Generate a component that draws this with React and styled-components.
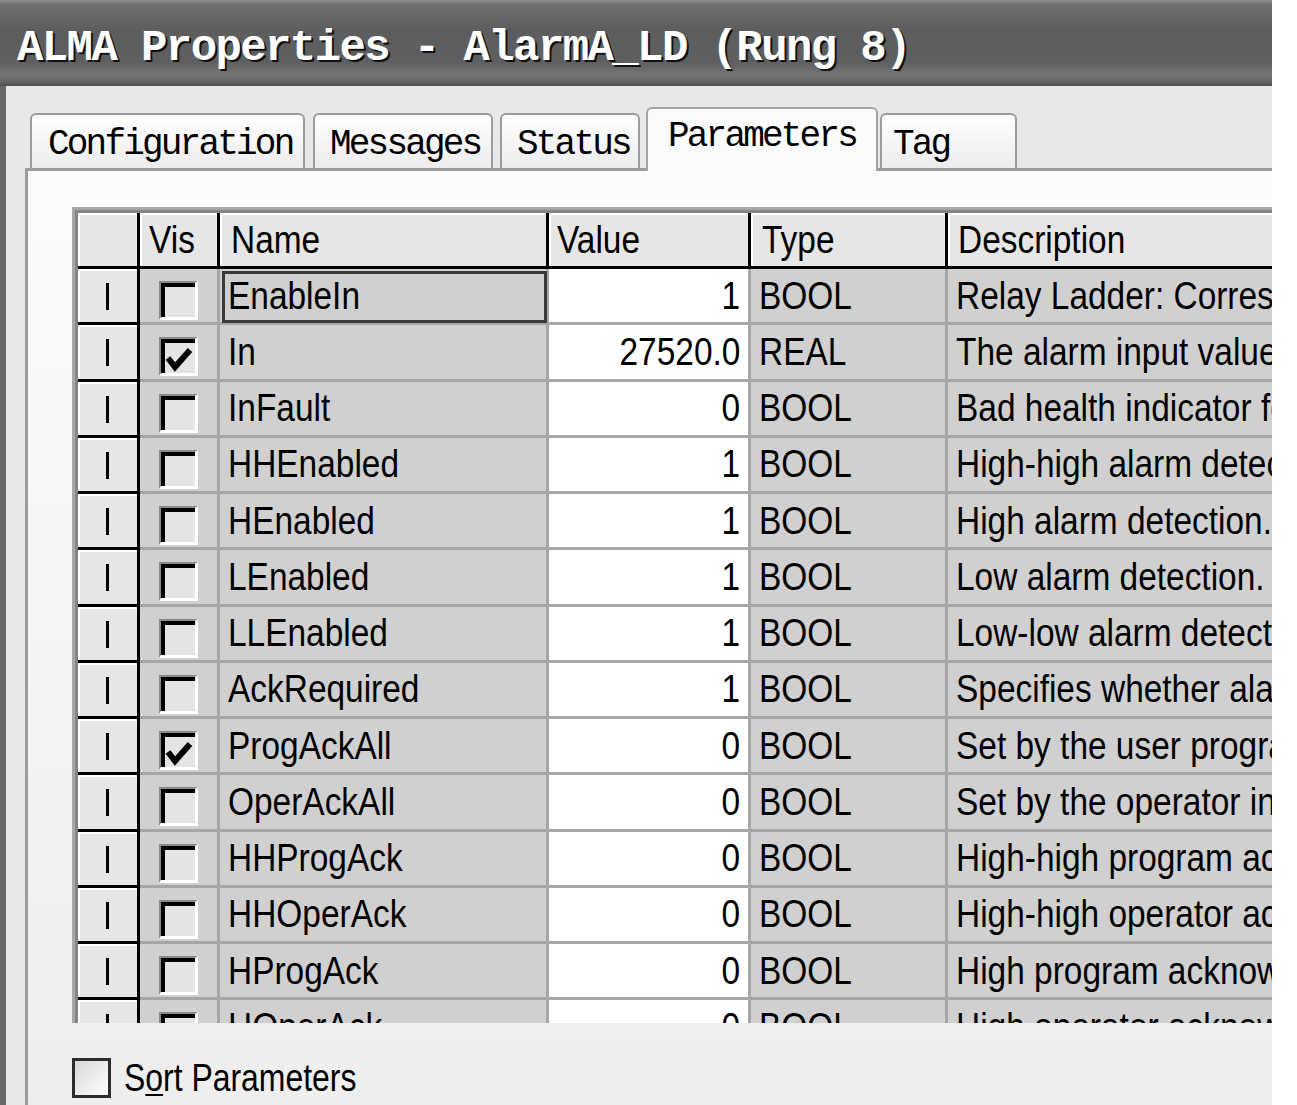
import React from "react";
import styled, { createGlobalStyle, css } from "styled-components";

const GlobalStyle = createGlobalStyle`
  html, body { margin: 0; padding: 0; background: #ffffff; }
  body { font-family: "Liberation Sans", Arial, sans-serif; }
  * { box-sizing: border-box; }
`;

const COLS = "62px 80px 329px 202px 197px 560px";

const Window = styled.div`
  width: 1272px;
  height: 1105px;
  overflow: hidden;
  display: flex;
  flex-direction: column;
  background: #e8e8e8;
`;

const TitleBar = styled.div`
  flex: none;
  height: 86px;
  display: flex;
  align-items: center;
  padding-left: 17px;
  background: linear-gradient(
    to bottom,
    #8e8e8e 0px,
    #6e6e6e 5px,
    #5d5d5d 30px,
    #5f5f5f 62px,
    #737373 74px,
    #6a6a6a 80px,
    #4e4e4e 86px
  );
`;

const TitleText = styled.span`
  font-family: "Liberation Mono", "Courier New", monospace;
  font-weight: bold;
  font-size: 44px;
  letter-spacing: -1.6px;
  line-height: 1;
  color: #ffffff;
  text-shadow: 2px 2px 0 #111111;
  white-space: pre;
  margin-top: 10px;
`;

const Body = styled.div`
  flex: 1;
  min-height: 0;
  display: flex;
  flex-direction: column;
  border-left: 6px solid #686868;
  padding: 21px 0 0 19px;
`;

const TabStrip = styled.div`
  flex: none;
  height: 61px;
  display: flex;
  align-items: flex-end;
  padding-left: 5px;
  position: relative;
  z-index: 1;
`;

const Tab = styled.div`
  flex: none;
  width: ${(p) => p.$w}px;
  height: 55px;
  margin-right: ${(p) => p.$gap}px;
  padding-left: ${(p) => p.$pad}px;
  padding-top: 6px;
  display: flex;
  align-items: center;
  border: 2px solid #9c9c9c;
  border-bottom: none;
  border-radius: 6px 6px 0 0;
  background: linear-gradient(to bottom, #ffffff, #ececec);
  font-family: "Liberation Mono", "Courier New", monospace;
  font-size: 36px;
  letter-spacing: -2.8px;
  color: #000000;
  white-space: pre;
  ${(p) =>
    p.$active &&
    css`
      height: 64px;
      margin-bottom: -3px;
      padding-top: 0;
      padding-bottom: 8px;
      background: #fbfbfb;
      border-color: #a4a4a4;
    `}
`;

const Panel = styled.div`
  flex: 1;
  min-height: 0;
  width: 1400px;
  display: flex;
  flex-direction: column;
  border-top: 3px solid #9c9c9c;
  border-left: 3px solid #9c9c9c;
  background: linear-gradient(to bottom, #fcfcfc, #eeeeee);
  padding: 36px 0 0 44px;
`;

const GridFrame = styled.div`
  flex: none;
  height: 816px;
  overflow: hidden;
  border-top: 3px solid #a8a8a8;
  border-left: 3px solid #a8a8a8;
`;

const GridInner = styled.div`
  height: 100%;
  border-top: 3px solid #858585;
  border-left: 3px solid #858585;
  background: #d0d0d0;
`;

const HeaderRow = styled.div`
  display: grid;
  grid-template-columns: ${COLS};
  height: 56px;
`;

const HeaderCell = styled.div`
  display: flex;
  align-items: center;
  padding-left: ${(p) => p.$pad ?? 10}px;
  background: #e6e6e6;
  border-right: 3px solid #000000;
  border-bottom: 3px solid #000000;
  box-shadow: inset 2px 2px 0 #ffffff;
  overflow: hidden;
`;

const Row = styled.div`
  display: grid;
  grid-template-columns: ${COLS};
  height: 56.25px;
`;

const RowHead = styled.div`
  display: flex;
  align-items: center;
  justify-content: center;
  background: #e6e6e6;
  border-right: 3px solid #000000;
  border-bottom: 3px solid #000000;
  box-shadow: inset 2px 2px 0 #ffffff;
`;

const RowMarker = styled.span`
  width: 3px;
  height: 27px;
  margin-top: 2px;
  background: #000000;
`;

const Cell = styled.div`
  display: flex;
  align-items: center;
  justify-content: ${(p) => (p.$right ? "flex-end" : "flex-start")};
  padding: 0 ${(p) => (p.$right ? 8 : 0)}px 0 ${(p) => (p.$right ? 0 : 8)}px;
  background: ${(p) => (p.$white ? "#ffffff" : "#d0d0d0")};
  border-right: 3px solid #a6a6a6;
  border-bottom: 3px solid #a6a6a6;
  overflow: hidden;
  white-space: nowrap;
  ${(p) =>
    p.$focus &&
    css`
      outline: 3px solid #3a3a3a;
      outline-offset: -5px;
    `}
`;

const VisCell = styled(Cell)`
  justify-content: center;
  padding: 10px 0 0 0;
`;

const CellText = styled.span`
  display: inline-block;
  font-family: "Liberation Sans", Arial, sans-serif;
  font-size: 38px;
  line-height: 1;
  color: #000000;
  white-space: nowrap;
  transform: scaleX(${(p) => p.$scale ?? 0.88});
  transform-origin: ${(p) => (p.$right ? "right" : "left")} center;
`;

const CheckBox = styled.div`
  width: 39px;
  height: 39px;
  display: flex;
  align-items: flex-end;
  justify-content: flex-start;
  padding: 0 0 0 4px;
  border-top: 2px solid #8a8a8a;
  border-left: 2px solid #8a8a8a;
  border-right: 3px solid #ffffff;
  border-bottom: 3px solid #ffffff;
  background: #e4e4e4;
  box-shadow: inset 4px 4px 0 #000000;
`;

const SortRow = styled.div`
  flex: none;
  display: flex;
  align-items: center;
  gap: 13px;
  margin-top: 35px;
`;

const SortBox = styled.div`
  width: 39px;
  height: 40px;
  border: 3px solid #2c2c2c;
  background: linear-gradient(135deg, #d8d8d8, #ffffff);
`;

const Mnemonic = styled.span`
  text-decoration: underline;
  text-underline-offset: 3px;
  text-decoration-thickness: 2px;
`;

const tabs = [
  { label: "Configuration", w: 275, gap: 8, pad: 16 },
  { label: "Messages", w: 180, gap: 7, pad: 15 },
  { label: "Status", w: 140, gap: 6, pad: 15 },
  { label: "Parameters", w: 232, gap: 2, pad: 20, active: true },
  { label: "Tag", w: 137, gap: 0, pad: 11 },
];

const rows = [
  { name: "EnableIn", value: "1", type: "BOOL", desc: "Relay Ladder: Corresponds to the rung state", focus: true },
  { name: "In", value: "27520.0", type: "REAL", desc: "The alarm input value", vis: true },
  { name: "InFault", value: "0", type: "BOOL", desc: "Bad health indicator for the input" },
  { name: "HHEnabled", value: "1", type: "BOOL", desc: "High-high alarm detection" },
  { name: "HEnabled", value: "1", type: "BOOL", desc: "High alarm detection. When set" },
  { name: "LEnabled", value: "1", type: "BOOL", desc: "Low alarm detection. When set" },
  { name: "LLEnabled", value: "1", type: "BOOL", desc: "Low-low alarm detection" },
  { name: "AckRequired", value: "1", type: "BOOL", desc: "Specifies whether alarm acknowledgement" },
  { name: "ProgAckAll", value: "0", type: "BOOL", desc: "Set by the user program", vis: true },
  { name: "OperAckAll", value: "0", type: "BOOL", desc: "Set by the operator interface" },
  { name: "HHProgAck", value: "0", type: "BOOL", desc: "High-high program acknowledge" },
  { name: "HHOperAck", value: "0", type: "BOOL", desc: "High-high operator acknowledge" },
  { name: "HProgAck", value: "0", type: "BOOL", desc: "High program acknowledge" },
  { name: "HOperAck", value: "0", type: "BOOL", desc: "High operator acknowledge" },
];

const headers = [
  { label: "", pad: 10 },
  { label: "Vis", pad: 9 },
  { label: "Name", pad: 11 },
  { label: "Value", pad: 8 },
  { label: "Type", pad: 11 },
  { label: "Description", pad: 10 },
];

function Check() {
  return (
    <svg width="28" height="28" viewBox="0 0 28 28">
      <polyline
        points="3,13 10,22 25,5"
        fill="none"
        stroke="#000"
        strokeWidth="6"
        strokeLinejoin="miter"
      />
    </svg>
  );
}

export default function App() {
  return (
    <>
      <GlobalStyle />
      <Window>
        <TitleBar>
          <TitleText>ALMA Properties - AlarmA_LD (Rung 8)</TitleText>
        </TitleBar>
        <Body>
          <TabStrip>
            {tabs.map((t) => (
              <Tab key={t.label} $w={t.w} $gap={t.gap} $pad={t.pad} $active={t.active}>
                {t.label}
              </Tab>
            ))}
          </TabStrip>
          <Panel>
            <GridFrame>
              <GridInner>
                <HeaderRow>
                  {headers.map((h, i) => (
                    <HeaderCell key={i} $pad={h.pad}>
                      <CellText>{h.label}</CellText>
                    </HeaderCell>
                  ))}
                </HeaderRow>
                {rows.map((r) => (
                  <Row key={r.name}>
                    <RowHead>
                      <RowMarker />
                    </RowHead>
                    <VisCell>
                      <CheckBox>{r.vis && <Check />}</CheckBox>
                    </VisCell>
                    <Cell $focus={r.focus}>
                      <CellText>{r.name}</CellText>
                    </Cell>
                    <Cell $white $right>
                      <CellText $right>{r.value}</CellText>
                    </Cell>
                    <Cell>
                      <CellText>{r.type}</CellText>
                    </Cell>
                    <Cell>
                      <CellText>{r.desc}</CellText>
                    </Cell>
                  </Row>
                ))}
              </GridInner>
            </GridFrame>
            <SortRow>
              <SortBox />
              <CellText $scale={0.84}>
                S<Mnemonic>o</Mnemonic>rt Parameters
              </CellText>
            </SortRow>
          </Panel>
        </Body>
      </Window>
    </>
  );
}
